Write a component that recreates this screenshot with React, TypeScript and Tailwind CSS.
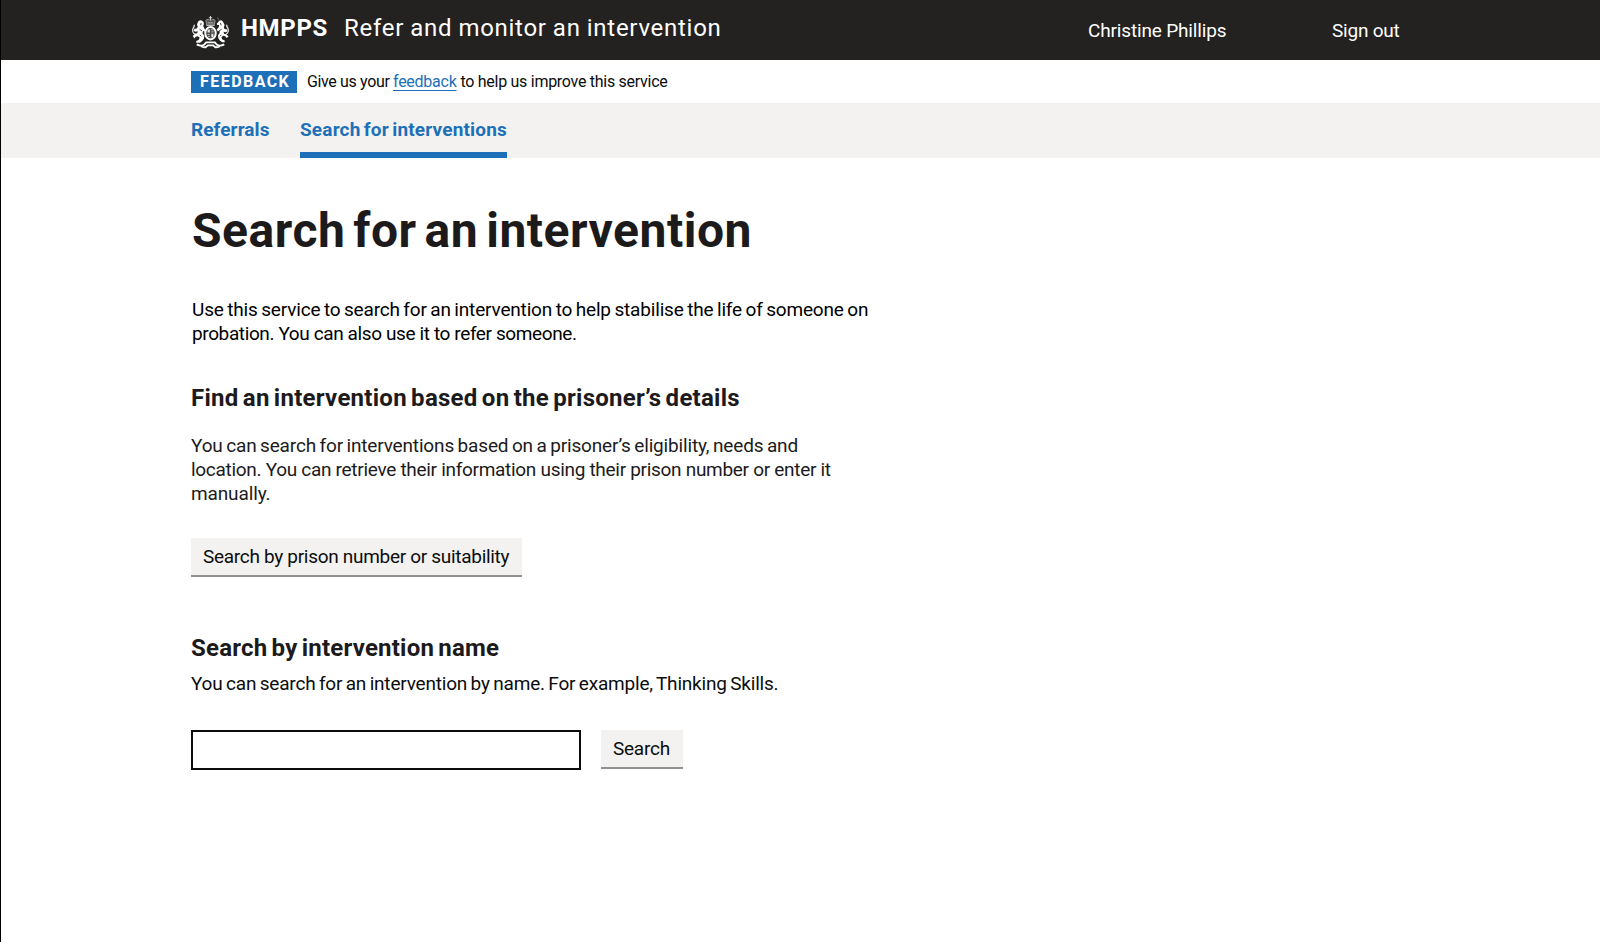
function RoyalArms() {
  return (
    <svg width="37" height="33" viewBox="0.5 0 35 31.2" fill="none" aria-hidden="true">
      {/* crown */}
      <path d="M18 0v4M16.400 1.600h3.200" stroke="#d8d8d8" strokeWidth="0.9" />
      <path d="M13.600 4.200c1.200-1.600 3-.9 4.400 0 1.400-.9 3.200-1.600 4.400 0l-.9 4.300h-7z" fill="#555" stroke="#a5a5a5" strokeWidth="0.8" />
      <path d="M14 9h8M15.300 6.500h5.400" stroke="#c4c4c4" strokeWidth="0.8" />
      {/* shield and garter */}
      <ellipse cx="18" cy="16.300" rx="5" ry="5.900" fill="#4a4a49" stroke="#fff" strokeWidth="1.800" />
      <path d="M15.200 12.800h2.200v2.800h-2.200zM18.800 16.800h2v3.200h-2z" fill="#e4e4e4" />
      <path d="M18.600 13h2.200M18.800 15h2M15.200 17.500h2M15.800 19.400h1.500" stroke="#c8c8c8" strokeWidth="0.9" />
      {/* lion */}
      <path d="M6.300 5.200 8 3.900l1.800.3 1.600 1.400.4 2.300-.7 1.400.9 2.300 1.100 1.300-.6 1.800-1.700-.6-.3 2.400 1.600 2.200-.2 2.600-1.500 2.200-2.200 1.800H4.800l-.5-1.500 2.700-1.400.7-1.800-1.600-1.500-2.100.5-1.200 1.700L1.200 19l1.900-2.100 2.300-.7.6-1.900-2.100.5-2-.9 1-1.800 2.200-.3.800-1.700-.7-2z" fill="#fff" />
      <path d="m9.200 6.500-.5 2.200M7.600 12.500l2.300 1.500M7.800 17.800l1.400 1.400" stroke="#232220" strokeWidth="0.8" />
      <path d="M3.400 17.400C1.100 16.200.7 13.600 1.600 11.600c.8-1.400 1.400-2 .9-3.400" stroke="#ddd" strokeWidth="1.300" />
      {/* unicorn */}
      <path d="M29.700 5.200 28.200 3.900l-1.800.5-2.400 2.700.3 1.500 2-.2-.7 2.500-1.600 1.600.7 1.900 1.800-.8.2 2.500-1.600 2.200.2 2.600 1.500 2.200 2.200 1.800h2.200l.5-1.500-2.700-1.400-.7-1.800 1.600-1.500 2.100.5 1.200 1.700 1.900-1.400-1.900-2.100-2.300-.7-.6-1.900 2.100.5 2-.9-1-1.800-2.200-.3-.6-1.700.8-2z" fill="#fff" />
      <path d="m27.400 6.500.7 2.300M28.500 12.500l-2.300 1.500M28.300 17.800l-1.400 1.400" stroke="#232220" strokeWidth="0.8" />
      <path d="M26.500 4.800 24.700 1.300" stroke="#888" strokeWidth="0.7" />
      <path d="M32.600 17.400c2.300-1.200 2.700-3.800 1.800-5.800-.8-1.400-1.400-2-.9-3.400" stroke="#ddd" strokeWidth="1.300" />
      {/* motto ribbon */}
      <path d="M5 26.800c2.500 1.500 4.700 1.600 6.900.4l2-2.300h8.200l2 2.300c2.200 1.200 4.400 1.100 6.900-.4" stroke="#fff" strokeWidth="1.800" />
      <path d="M9 28.600c1.500.9 3 1.100 4.500.9l2-1.700h5l2 1.700c1.500.2 3 0 4.500-.9" stroke="#fff" strokeWidth="1.800" />
    </svg>
  );
}

function Header() {
  return (
    <header className="flex h-[60px] bg-[#232220] pl-[190px] text-white">
      <div className="flex w-[897px] items-start pt-[14px]">
        <div className="mr-[12px] ml-px mt-[2px]">
          <RoyalArms />
        </div>
        <span className="w-[103px] whitespace-nowrap text-[24px] leading-[28px] font-bold tracking-[0.65px]">HMPPS</span>
        <span className="whitespace-nowrap text-[24px] leading-[28px] tracking-[0.72px] [word-spacing:-0.5px]">
          Refer and monitor an intervention
        </span>
      </div>
      <nav className="flex pt-[19px] text-[19px] leading-[24px] whitespace-nowrap">
        <a href="#account" className="w-[244px] tracking-[-0.16px]">Christine Phillips</a>
        <a href="#sign-out" className="tracking-[-0.22px]">Sign out</a>
      </nav>
    </header>
  );
}

function FeedbackBanner() {
  return (
    <div className="flex h-[43px] items-start pt-[11px] pl-[190px] text-[16px] leading-[22px] whitespace-nowrap text-[#0b0c0c]">
      <strong className="mr-[10px] w-[106px] bg-[#1d70b8] pl-[9px] font-bold tracking-[1.45px] text-white">FEEDBACK</strong>
      <span className="w-[86px] tracking-[-0.36px]">Give us your</span>
      <a href="#feedback" className="mr-[3px] w-[64px] tracking-[-0.25px] text-[#1d70b8] underline decoration-1 underline-offset-[3px]">
        feedback
      </a>
      <span className="pl-[0.5px] tracking-[-0.28px]">to help us improve this service</span>
    </div>
  );
}

function PrimaryNav() {
  return (
    <nav className="flex h-[55px] bg-[#f3f2f1] pl-[190px] text-[19px] leading-[24px] font-bold whitespace-nowrap text-[#1d70b8]">
      <a href="#referrals" className="mr-[31px] w-[78px] pt-[15px] tracking-[0.08px]">Referrals</a>
      <a href="#search" className="w-[207px] border-b-[6px] border-[#1d70b8] pt-[15px] tracking-[0.17px] [word-spacing:-1.5px]">
        Search for interventions
      </a>
    </nav>
  );
}

function SecondaryButton({ label, className }: { label: string; className: string }) {
  return (
    <button
      type="button"
      className={`flex h-[39px] items-center border-b-2 border-[#929191] bg-[#f3f2f1] pl-[12px] text-[19px] leading-[24px] whitespace-nowrap text-[#0b0c0c] ${className}`}
    >
      {label}
    </button>
  );
}

export default function App() {
  return (
    <div className="h-[942px] overflow-hidden border-l border-black bg-white font-['Roboto',sans-serif]">
      <Header />
      <FeedbackBanner />
      <PrimaryNav />
      <main className="flex flex-col items-start pt-[48px] pl-[190px] text-[19px] leading-[24px] whitespace-nowrap text-[#0b0c0c]">
        <h1 className="pl-px text-[48px] leading-[50px] font-bold tracking-[0.52px] text-[#1c1a1b] [word-spacing:-4.5px]">
          Search for an intervention
        </h1>
        <p className="mt-[42px] flex flex-col pl-px text-black">
          <span className="tracking-[-0.17px] [word-spacing:-1px]">Use this service to search for an intervention to help stabilise the life of someone on</span>
          <span className="tracking-[-0.387px]">probation. You can also use it to refer someone.</span>
        </p>
        <h2 className="mt-[37px] text-[24px] leading-[30px] font-bold tracking-[0.27px] text-[#1c1a1b] [word-spacing:-2px]">
          Find an intervention based on the prisoner’s details
        </h2>
        <p className="mt-[21px] flex flex-col text-[#1c1a1b]">
          <span className="tracking-[-0.16px] [word-spacing:-1px]">You can search for interventions based on a prisoner’s eligibility, needs and</span>
          <span className="tracking-[-0.296px]">location. You can retrieve their information using their prison number or enter it</span>
          <span className="tracking-[-0.13px]">manually.</span>
        </p>
        <SecondaryButton label="Search by prison number or suitability" className="mt-[32px] w-[331px] tracking-[-0.3px]" />
        <h2 className="mt-[56px] text-[24px] leading-[30px] font-bold tracking-[0.22px] text-[#1c1a1b] [word-spacing:-2px]">
          Search by intervention name
        </h2>
        <p className="mt-[9px] tracking-[-0.2px] [word-spacing:-1px]">You can search for an intervention by name. For example, Thinking Skills.</p>
        <form className="mt-[34px] flex items-start">
          <input type="text" aria-label="Intervention name" className="mr-[20px] h-[40px] w-[390px] border-2 border-[#0b0c0c] bg-white px-[5px] outline-none" />
          <SecondaryButton label="Search" className="w-[82px] tracking-[-0.25px]" />
        </form>
      </main>
    </div>
  );
}
